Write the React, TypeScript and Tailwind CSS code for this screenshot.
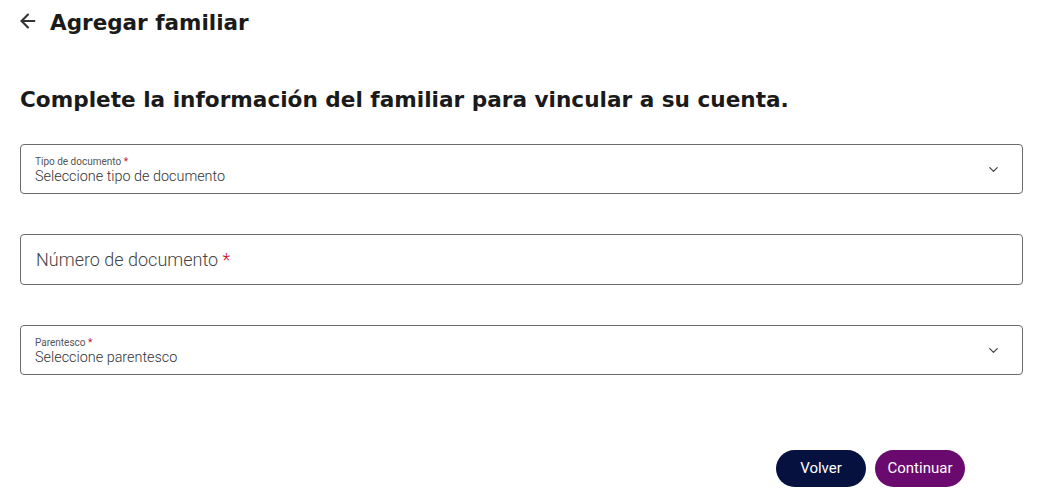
import { ArrowLeft, ChevronDown } from 'lucide-react'

const heading = { fontFamily: '"DejaVu Sans", "Noto Sans", sans-serif' }
const body = { fontFamily: 'Roboto, "Liberation Sans", sans-serif' }

// Select-style field with a floating label
function SelectField({ label, placeholder }: { label: string; placeholder: string }) {
  return (
    <div className="flex h-[50px] items-center justify-between rounded border border-[#6b6b6b] pl-[14px] pr-[21px]">
      <div className="flex flex-col pt-[2px]">
        <span className="text-[10px] leading-[13px] text-[#555]">
          {label}
          <span className="text-[#c8102e]"> *</span>
        </span>
        <span className="text-[14.4px] leading-[18px] font-light text-[#333]">{placeholder}</span>
      </div>
      <ChevronDown className="h-[15px] w-[15px] text-[#444]" strokeWidth={2} />
    </div>
  )
}

export default function App() {
  return (
    <div className="min-h-[504px] bg-white pl-[20px] pr-[17px] pt-[9px]" style={body}>
      {/* Header */}
      <div className="flex items-center gap-[11px]">
        <ArrowLeft className="-ml-[3px] -mt-[4px] h-[22px] w-[22px] text-[#333]" strokeWidth={2.3} />
        <h1 className="text-[21.5px] font-bold leading-[28px] text-[#1a1a1a]" style={heading}>
          Agregar familiar
        </h1>
      </div>

      <h2 className="mt-[49px] text-[21.6px] font-bold leading-[28px] text-[#1a1a1a]" style={heading}>
        Complete la información del familiar para vincular a su cuenta.
      </h2>

      <div className="mt-[30px] flex flex-col gap-[40px]">
        <SelectField label="Tipo de documento" placeholder="Seleccione tipo de documento" />

        <div className="flex h-[51px] items-center rounded border border-[#6b6b6b] px-[15px]">
          <span className="text-[18px] font-light text-[#444]">
            Número de documento <span className="text-[#c8102e]">*</span>
          </span>
        </div>

        <SelectField label="Parentesco" placeholder="Seleccione parentesco" />
      </div>

      {/* Actions */}
      <div className="mt-[75px] flex justify-end gap-[9px] pr-[58px]">
        <button className="h-[37px] w-[90px] rounded-full bg-[#06113f] text-[15px] text-white">
          Volver
        </button>
        <button className="h-[37px] w-[90px] rounded-full bg-[#6b0a6e] text-[15px] text-white">
          Continuar
        </button>
      </div>
    </div>
  )
}
